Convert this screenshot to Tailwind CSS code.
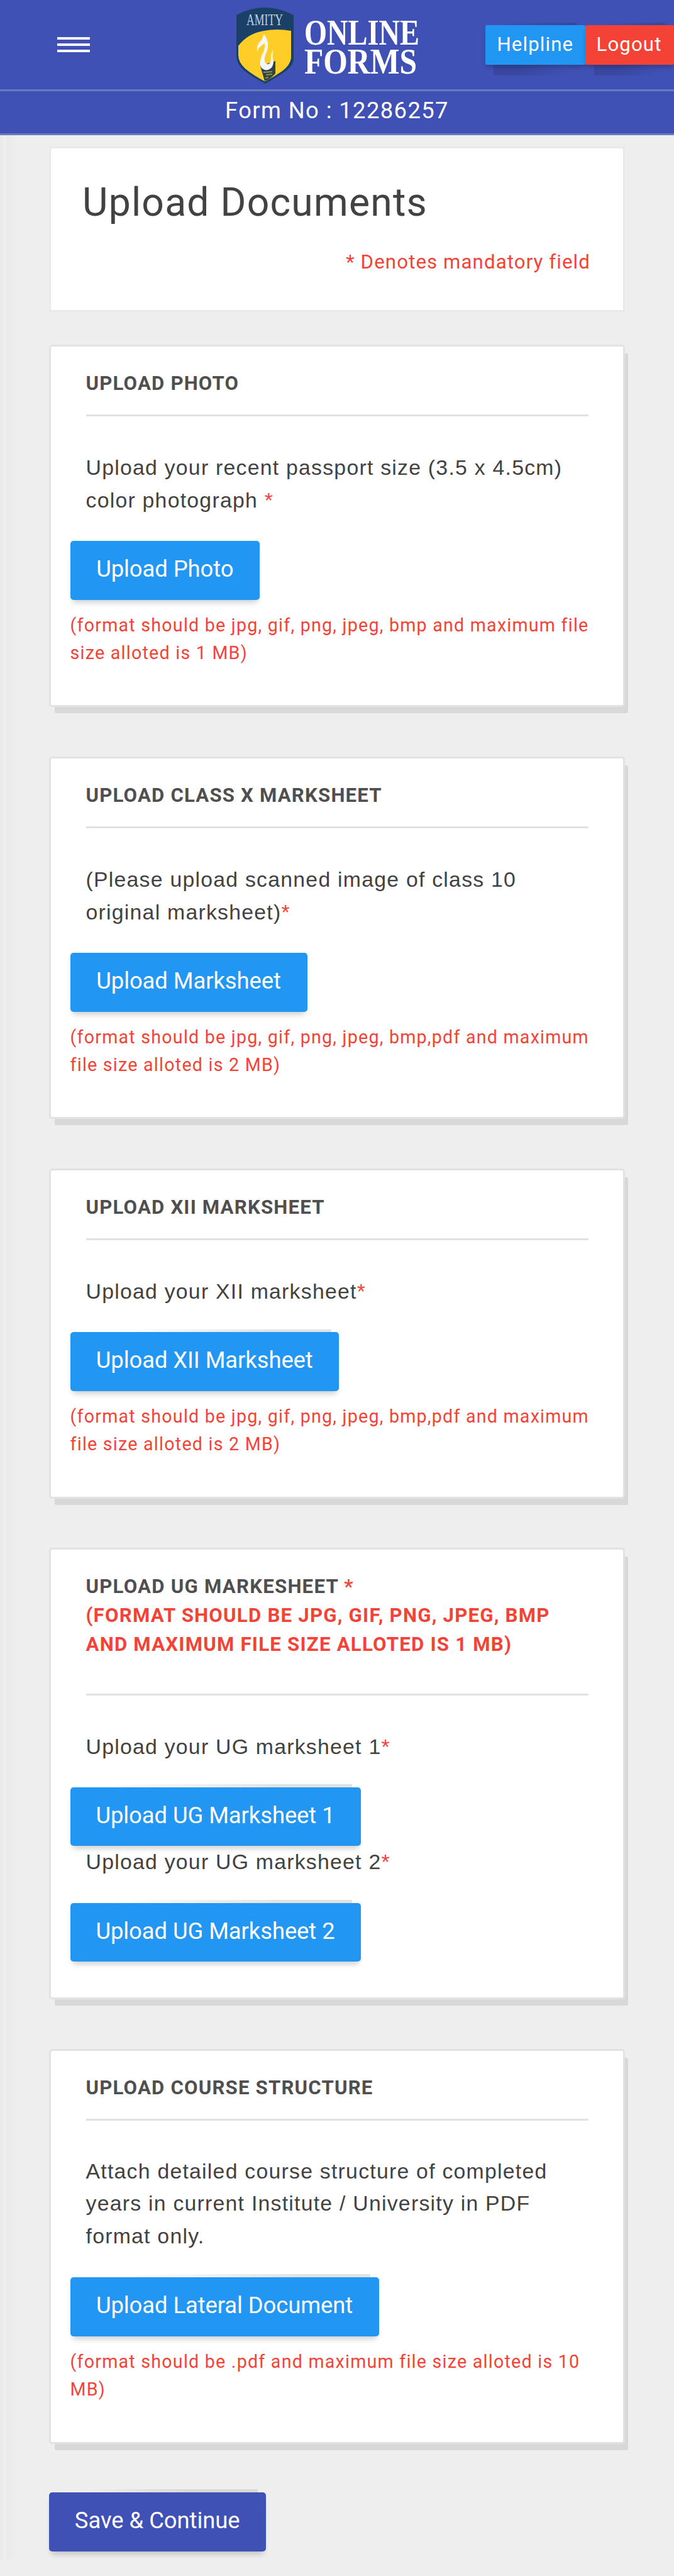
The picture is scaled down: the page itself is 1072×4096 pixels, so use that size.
<!DOCTYPE html>
<html lang="en">
<head>
    <meta charset="UTF-8">
    <meta name="viewport" content="width=device-width, initial-scale=1.0">
    <title>Upload Documents</title>
    <script src="https://cdn.jsdelivr.net/npm/@tailwindcss/browser@4"></script>
</head>
<body class="bg-[#eeeeee] text-[#424242] font-[Roboto,sans-serif] w-[1072px] h-[4096px] overflow-hidden relative">

    <!-- Header -->
    <header class="bg-[#3f51b5] text-white">
        <div class="h-[145px] border-b-3 border-[#6b78bd] flex items-center relative">
            <button class="ml-[91px] mt-[-1px] w-[52px] flex flex-col gap-[6px]" aria-label="Menu">
                <span class="block h-[4px] bg-white"></span>
                <span class="block h-[4px] bg-white"></span>
                <span class="block h-[4px] bg-white"></span>
            </button>

            <!-- Logo -->
            <svg class="ml-[229px] mt-px" width="300" height="142" viewBox="0 0 300 142">
                <path d="M4 23 Q49 -1 95 23 V92 Q95 102 84 111 Q70 121 50 132 Q28 121 16 111 Q4 101 4 88 Z" fill="#1a4067"/>
                <path d="M7 72 Q22 52 48 48 Q68 44 91 48 V91 Q90 102 77 112 Q64 121 49.500 128.500 Q31 119 18 108 Q7 98 7 86 Z" fill="#ffcd28"/>
                <path d="M42 104 L66 96 L66 116 Q58 125 49 128 Z" fill="#28444f"/>
                <path d="M47 114 L61 113 M51 118 L61 117 M50 123 L55 122" stroke="#a48d37" stroke-width="2"/>
                <path d="M47.500 53 Q58 66 52 82 Q46 94 51 100 Q58 104 59 93 Q58 84 63 78 Q60 89 63 97 Q62 110 51 110.500 Q41 109 41.500 97 Q43 88 48 79 Q50 73 49 68 Q45 70 39 76 L37.500 82 Q35 74 40 67 Q46 61 47.500 53 Z" fill="#f4f5f7"/>
                <text x="20" y="38.500" fill="#c3d0dc" font-family="Liberation Serif" font-size="25" textLength="58" lengthAdjust="spacingAndGlyphs">AMITY</text>
                <g fill="#fff" font-family="Liberation Serif" font-weight="700" font-size="58">
                    <text x="112" y="69.500" textLength="183" lengthAdjust="spacingAndGlyphs">ONLINE</text>
                    <text x="112" y="116" textLength="179" lengthAdjust="spacingAndGlyphs">FORMS</text>
                </g>
            </svg>

            <div class="absolute right-0 top-[39.5px] flex text-[31.2px] tracking-[1.12px]">
                <div class="relative w-[159px] h-[63px]">
                    <span class="absolute -top-[4px] left-[30px] right-[14px] h-[4px] bg-linear-to-r from-transparent to-[#38469b]"></span>
                    <span class="absolute top-[63px] left-[13px] right-[14px] h-[17px] bg-linear-to-r from-[#3947a0] from-30% to-transparent to-90%"></span>
                    <a class="relative flex items-center h-full pl-[19px] bg-[#2196f3] rounded-[2px] shadow-[0_5px_8px_-2px_rgba(0,0,0,0.25)]">Helpline</a>
                </div>
                <div class="relative w-[141.5px] h-[63px]">
                    <span class="absolute -top-[4px] left-[30px] right-[14px] h-[4px] bg-linear-to-r from-transparent to-[#38469b]"></span>
                    <span class="absolute top-[63px] left-[14px] right-[14px] h-[17px] bg-linear-to-r from-[#3947a0] from-30% to-transparent to-90%"></span>
                    <a class="relative flex items-center h-full pl-[18px] bg-[#f44336] rounded-[2px] shadow-[0_5px_8px_-2px_rgba(0,0,0,0.25)]">Logout</a>
                </div>
            </div>
        </div>
        <div class="h-[70px] border-b-3 border-[#6b78bd] flex items-center justify-center pb-[4px] text-[36.4px] tracking-[1.38px]">Form No : 12286257</div>
    </header>

    <!-- Edge of the closed drawer -->
    <div class="absolute left-0 top-[215px] w-[24px] h-[3855px] flex">
        <span class="w-[11px] bg-linear-to-r from-[#e9e9e9] to-[#eeeeee] to-60%"></span>
        <span class="w-[13px] bg-linear-to-r from-[#e9e9e9] to-[#eeeeee]"></span>
    </div>

    <main class="relative w-[916px] ml-[78px] pt-[18px]">
        <section class="h-[263px] bg-white border-3 border-[#e9e9e9] pt-[44px] pl-[50px] pr-[52px]">
            <h1 class="text-[62.4px] leading-[83px] tracking-[1.23px]">Upload Documents</h1>
            <p class="mt-[31.5px] text-right text-[31.2px] leading-[44px] tracking-[1.11px] text-[#f44336]">* Denotes mandatory field</p>
        </section>

        <div class="mt-[51.5px] flex flex-col gap-[78.5px]">
            <!-- Photo -->
            <section class="h-[576.5px] bg-white border-3 border-[#e2e2e2] rounded-[5px] shadow-[7px_12px_0_-2px_#d8d8d8] pt-[36.5px] pl-[30.5px]">
                <h2 class="ml-[25px] w-[799px] pb-[25.5px] border-b-3 border-[#e2e2e2] text-[31.2px] leading-[46.2px] tracking-[1.17px] font-bold uppercase text-[#4f4f4f]">Upload Photo</h2>
                <p class="ml-[25px] mt-[55px] mb-[39.5px] w-[799px] text-[33.8px] leading-[52px] tracking-[1.24px] font-['Liberation_Sans',sans-serif]">Upload your recent passport size (3.5 x 4.5cm) color photograph <span class="text-[#f44336]">*</span></p>
                <button class="block w-[301.5px] h-[94px] pb-[3px] bg-[#2196f3] rounded-[5px] text-white text-[36.4px] tracking-[-0.07px] shadow-[0_8px_10px_-4px_rgba(0,0,0,0.2)]">Upload Photo</button>
                <p class="mt-[17.5px] w-[850px] text-[28.6px] leading-[44.2px] tracking-[1.25px] text-[#f44336]">(format should be jpg, gif, png, jpeg, bmp and maximum file<br>size alloted is 1 MB)</p>
            </section>

            <!-- Class X -->
            <section class="h-[576.5px] bg-white border-3 border-[#e2e2e2] rounded-[5px] shadow-[7px_12px_0_-2px_#d8d8d8] pt-[36.5px] pl-[30.5px]">
                <h2 class="ml-[25px] w-[799px] pb-[25.5px] border-b-3 border-[#e2e2e2] text-[31.2px] leading-[46.2px] tracking-[1.17px] font-bold uppercase text-[#4f4f4f]">Upload Class X Marksheet</h2>
                <p class="ml-[25px] mt-[55px] mb-[39.5px] w-[799px] text-[33.8px] leading-[52px] tracking-[1.24px] font-['Liberation_Sans',sans-serif]">(Please upload scanned image of class 10<br>original marksheet)<span class="text-[#f44336]">*</span></p>
                <button class="block w-[377px] h-[94px] pb-[3px] bg-[#2196f3] rounded-[5px] text-white text-[36.4px] tracking-[-0.07px] shadow-[0_8px_10px_-4px_rgba(0,0,0,0.2)]">Upload Marksheet</button>
                <p class="mt-[17.5px] w-[850px] text-[28.6px] leading-[44.2px] tracking-[1.25px] text-[#f44336]">(format should be jpg, gif, png, jpeg, bmp,pdf and maximum<br>file size alloted is 2 MB)</p>
            </section>

            <!-- Class XII -->
            <section class="h-[525px] bg-white border-3 border-[#e2e2e2] rounded-[5px] shadow-[7px_12px_0_-2px_#d8d8d8] pt-[36.5px] pl-[30.5px]">
                <h2 class="ml-[25px] w-[799px] pb-[25.5px] border-b-3 border-[#e2e2e2] text-[31.2px] leading-[46.2px] tracking-[1.17px] font-bold uppercase text-[#4f4f4f]">Upload XII Marksheet</h2>
                <p class="ml-[25px] mt-[55px] mb-[39.5px] w-[799px] text-[33.8px] leading-[52px] tracking-[1.24px] font-['Liberation_Sans',sans-serif]">Upload your XII marksheet<span class="text-[#f44336]">*</span></p>
                <div class="relative w-[427.5px] h-[94px]">
                    <span class="absolute -top-[4px] left-[80px] right-[12px] h-[4px] bg-linear-to-r from-white to-[#e2e2e2] to-70%"></span>
                    <button class="relative block w-full h-full pb-[3px] bg-[#2196f3] rounded-[5px] text-white text-[36.4px] tracking-[-0.07px] shadow-[0_8px_10px_-4px_rgba(0,0,0,0.2)]">Upload XII Marksheet</button>
                </div>
                <p class="mt-[17.5px] w-[850px] text-[28.6px] leading-[44.2px] tracking-[1.25px] text-[#f44336]">(format should be jpg, gif, png, jpeg, bmp,pdf and maximum<br>file size alloted is 2 MB)</p>
            </section>

            <!-- UG -->
            <section class="h-[718px] bg-white border-3 border-[#e2e2e2] rounded-[5px] shadow-[7px_12px_0_-2px_#d8d8d8] pt-[36px] pl-[30.5px]">
                <h2 class="ml-[25px] w-[799px] pb-[54px] border-b-3 border-[#e2e2e2] text-[31.2px] leading-[46.2px] tracking-[1.22px] font-bold uppercase text-[#4f4f4f]">Upload UG Markesheet <span class="text-[#f44336]">*<br>(format should be jpg, gif, png, jpeg, bmp<br>and maximum file size alloted is 1 MB)</span></h2>
                <p class="ml-[25px] mt-[55px] mb-[39.5px] w-[799px] text-[33.8px] leading-[52px] tracking-[1.24px] font-['Liberation_Sans',sans-serif]">Upload your UG marksheet 1<span class="text-[#f44336]">*</span></p>
                <div class="relative w-[462px] h-[93px]">
                    <span class="absolute -top-[5px] left-[60px] right-[14px] h-[5px] bg-linear-to-r from-white to-[#e2e2e2] to-70%"></span>
                    <button class="relative block w-full h-full pb-[3px] bg-[#2196f3] rounded-[5px] text-white text-[36.4px] tracking-[-0.07px] shadow-[0_8px_10px_-4px_rgba(0,0,0,0.2)]">Upload UG Marksheet 1</button>
                </div>
                <p class="relative ml-[25px] mb-[39.5px] w-[799px] text-[33.8px] leading-[51.5px] tracking-[1.24px] font-['Liberation_Sans',sans-serif]">Upload your UG marksheet 2<span class="text-[#f44336]">*</span></p>
                <div class="relative w-[462px] h-[93px]">
                    <span class="absolute -top-[5px] left-[60px] right-[14px] h-[5px] bg-linear-to-r from-white to-[#e2e2e2] to-70%"></span>
                    <button class="relative block w-full h-full pb-[3px] bg-[#2196f3] rounded-[5px] text-white text-[36.4px] tracking-[-0.07px] shadow-[0_8px_10px_-4px_rgba(0,0,0,0.2)]">Upload UG Marksheet 2</button>
                </div>
            </section>

            <!-- Course structure -->
            <section class="h-[628px] bg-white border-3 border-[#e2e2e2] rounded-[5px] shadow-[7px_12px_0_-2px_#d8d8d8] pt-[36.5px] pl-[30.5px]">
                <h2 class="ml-[25px] w-[799px] pb-[25.5px] border-b-3 border-[#e2e2e2] text-[31.2px] leading-[46.2px] tracking-[1.17px] font-bold uppercase text-[#4f4f4f]">Upload Course Structure</h2>
                <p class="ml-[25px] mt-[55px] mb-[40px] w-[799px] text-[33.8px] leading-[51.5px] tracking-[1.24px] font-['Liberation_Sans',sans-serif]">Attach detailed course structure of completed<br>years in current Institute / University in PDF<br>format only.</p>
                <div class="relative w-[491px] h-[94px]">
                    <span class="absolute -top-[5px] left-[100px] right-[14px] h-[5px] bg-linear-to-r from-white to-[#e2e2e2] to-70%"></span>
                    <button class="relative block w-full h-full pb-[3px] bg-[#2196f3] rounded-[5px] text-white text-[36.4px] tracking-[-0.07px] shadow-[0_8px_10px_-4px_rgba(0,0,0,0.2)]">Upload Lateral Document</button>
                </div>
                <p class="mt-[17.5px] w-[850px] text-[28.6px] leading-[44.2px] tracking-[1.25px] text-[#f44336]">(format should be .pdf and maximum file size alloted is 10<br>MB)</p>
            </section>

            <div class="relative w-[344.5px] h-[93.5px] -mt-px">
                <span class="absolute -top-[5px] left-[60px] right-[13px] h-[5px] bg-linear-to-r from-[#eeeeee] to-[#d8d8d8] to-60%"></span>
                <button class="relative block w-full h-full pb-[3px] bg-[#3f51b5] rounded-[5px] text-white text-[36.4px] tracking-[-0.03px] shadow-[0_8px_10px_-4px_rgba(0,0,0,0.2)]">Save &amp; Continue</button>
            </div>
        </div>
    </main>
</body>
</html>
